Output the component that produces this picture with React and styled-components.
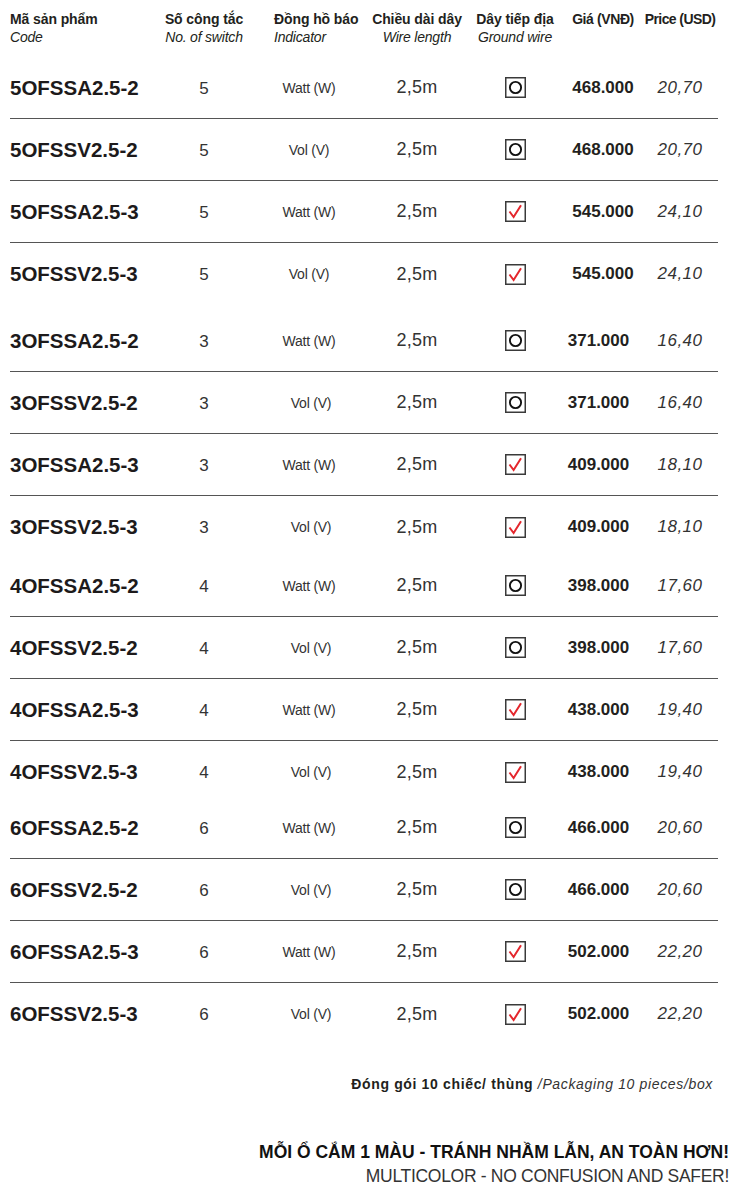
import React from 'react'
import styled, { createGlobalStyle } from 'styled-components'

const GlobalStyle = createGlobalStyle`
  body {
    margin: 0;
    background: #fff;
    font-family: 'Liberation Sans', Arial, sans-serif;
    color: #231f20;
  }
`

const cols = '150px 88px 122px 94px 102px 74px 80px'

const Page = styled.div`
  width: 740px;
  height: 1192px;
  padding: 10px 0 0 10px;
  box-sizing: border-box;
`

const HeaderRow = styled.div`
  display: grid;
  grid-template-columns: ${cols};
  height: 47px;
`

const HeadCell = styled.div`
  display: flex;
  flex-direction: column;
  align-items: ${p => (p.left ? 'flex-start' : 'center')};
  padding-left: ${p => p.shift || 0}px;
`

const HeadTitle = styled.span`
  font-size: 14px;
  font-weight: 700;
  letter-spacing: ${p => p.ls ?? -0.1}px;
  line-height: 18px;
  white-space: nowrap;
`

const HeadSub = styled.span`
  font-size: 14px;
  font-style: italic;
  letter-spacing: -0.2px;
  line-height: 18px;
  white-space: nowrap;
`

const Group = styled.div`
  margin-top: ${p => p.gap}px;
`

const Row = styled.div`
  display: grid;
  grid-template-columns: ${cols};
  align-items: center;
  height: 62px;
  box-sizing: border-box;
  width: 708px;
  border-bottom: ${p => (p.last ? 'none' : '1.5px solid #555')};
`

const Code = styled.div`
  font-size: 20.5px;
  font-weight: 700;
  color: #1d1a1b;
`

const Center = styled.div`
  text-align: center;
  font-size: ${p => p.size || 17}px;
  letter-spacing: ${p => p.ls || 0}px;
  color: #333;
  padding-top: ${p => p.drop || 0}px;
  padding-left: ${p => p.shift || 0}px;
`

const Price = styled.div`
  text-align: center;
  font-size: 17px;
  font-weight: 700;
  color: #231f20;
  padding-right: ${p => p.shift || 0}px;
`

const Usd = styled.div`
  text-align: center;
  font-size: 17px;
  font-style: italic;
  letter-spacing: 0.5px;
  color: #333;
`

const BoxWrap = styled.div`
  display: flex;
  justify-content: center;
`

const Tick = styled.svg`
  display: block;
`

const Footer = styled.div`
  width: 703px;
  display: flex;
  flex-direction: column;
  align-items: flex-end;
`

const Packing = styled.div`
  margin-top: 31px;
  font-size: 14px;
  letter-spacing: 0.65px;
  white-space: nowrap;
  i {
    color: #333;
  }
`

const Slogan = styled.div`
  width: 719px;
  margin-top: 48px;
  display: flex;
  flex-direction: column;
  align-items: flex-end;
  line-height: 24px;
`

const SloganMain = styled.span`
  font-size: 17.5px;
  font-weight: 700;
  letter-spacing: 0px;
  color: #111;
`

const SloganSub = styled.span`
  font-size: 17.5px;
  color: #333;
  letter-spacing: -0.3px;
`

const GroundBox = ({ checked }) => (
  <Tick width="21" height="21" viewBox="0 0 21 21">
    <rect x="0.75" y="0.75" width="19.5" height="19.5" fill="#fff" stroke="#3a3a3a" strokeWidth="1.5" />
    {checked ? (
      <path d="M4.5 10.5 L8.6 16 L16 4.3" fill="none" stroke="#e4262c" strokeWidth="2" strokeLinejoin="miter" />
    ) : (
      <circle cx="10.5" cy="10.5" r="5.6" fill="none" stroke="#111" strokeWidth="1.9" />
    )}
  </Tick>
)

const groups = [
  {
    n: 5,
    gap: 0,
    shift: 0,
    vol: 0,
    prices: [['468.000', '20,70'], ['468.000', '20,70'], ['545.000', '24,10'], ['545.000', '24,10']],
  },
  {
    n: 3,
    gap: 5,
    shift: 9,
    vol: 8,
    prices: [['371.000', '16,40'], ['371.000', '16,40'], ['409.000', '18,10'], ['409.000', '18,10']],
  },
  {
    n: 4,
    gap: -3,
    shift: 9,
    vol: 8,
    prices: [['398.000', '17,60'], ['398.000', '17,60'], ['438.000', '19,40'], ['438.000', '19,40']],
  },
  {
    n: 6,
    gap: -6,
    shift: 9,
    vol: 8,
    prices: [['466.000', '20,60'], ['466.000', '20,60'], ['502.000', '22,20'], ['502.000', '22,20']],
  },
]

const variants = [
  { type: 'A', end: '2', label: 'Watt (W)', checked: false },
  { type: 'V', end: '2', label: 'Vol (V)', checked: false },
  { type: 'A', end: '3', label: 'Watt (W)', checked: true },
  { type: 'V', end: '3', label: 'Vol (V)', checked: true },
]

const App = () => (
  <Page>
    <GlobalStyle />
    <HeaderRow>
      <HeadCell left>
        <HeadTitle>Mã sản phẩm</HeadTitle>
        <HeadSub>Code</HeadSub>
      </HeadCell>
      <HeadCell>
        <HeadTitle>Số công tắc</HeadTitle>
        <HeadSub>No. of switch</HeadSub>
      </HeadCell>
      <HeadCell left shift={26}>
        <HeadTitle>Đồng hồ báo</HeadTitle>
        <HeadSub>Indicator</HeadSub>
      </HeadCell>
      <HeadCell>
        <HeadTitle>Chiều dài dây</HeadTitle>
        <HeadSub>Wire length</HeadSub>
      </HeadCell>
      <HeadCell>
        <HeadTitle>Dây tiếp địa</HeadTitle>
        <HeadSub>Ground wire</HeadSub>
      </HeadCell>
      <HeadCell>
        <HeadTitle ls={-0.4}>Giá (VNĐ)</HeadTitle>
      </HeadCell>
      <HeadCell>
        <HeadTitle ls={-0.6}>Price (USD)</HeadTitle>
      </HeadCell>
    </HeaderRow>

    {groups.map(g => (
      <Group key={g.n} gap={g.gap}>
        {variants.map((v, i) => (
          <Row key={v.type + v.end} last={i === 3}>
            <Code>{`${g.n}OFSS${v.type}2.5-${v.end}`}</Code>
            <Center drop={2}>{g.n}</Center>
            <Center size={14} ls={-0.2} shift={v.type === 'V' ? g.vol - 4 : 0}>
              {v.label}
            </Center>
            <Center size={18} ls={0.3}>
              2,5m
            </Center>
            <BoxWrap>
              <GroundBox checked={v.checked} />
            </BoxWrap>
            <Price shift={g.shift}>{g.prices[i][0]}</Price>
            <Usd>{g.prices[i][1]}</Usd>
          </Row>
        ))}
      </Group>
    ))}

    <Footer>
      <Packing>
        <b>Đóng gói 10 chiếc/ thùng</b> <i>/Packaging 10 pieces/box</i>
      </Packing>
    </Footer>
    <Slogan>
      <SloganMain>MỖI Ổ CẮM 1 MÀU - TRÁNH NHẦM LẪN, AN TOÀN HƠN!</SloganMain>
      <SloganSub>MULTICOLOR - NO CONFUSION AND SAFER!</SloganSub>
    </Slogan>
  </Page>
)

export default App
